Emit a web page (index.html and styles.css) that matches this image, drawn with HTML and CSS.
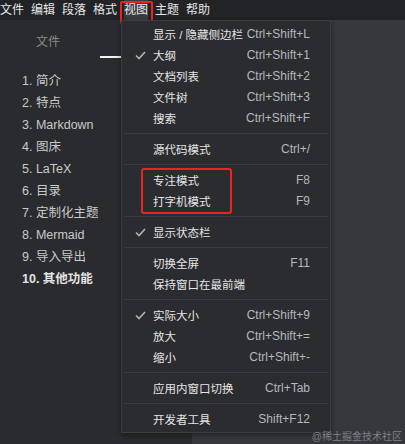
FILE: index.html
```html
<!DOCTYPE html>
<html lang="zh-CN">
<head>
    <meta charset="UTF-8">
    <meta name="viewport" content="width=device-width, initial-scale=1.0">
    <title>Typora</title>
    <link rel="stylesheet" href="styles.css">
</head>
<body>

    <!-- Top menu bar -->
    <div class="menubar">
        <span class="menubar-item">文件</span>
        <span class="menubar-item">编辑</span>
        <span class="menubar-item">段落</span>
        <span class="menubar-item">格式</span>
        <span class="menubar-item active marked">视图</span>
        <span class="menubar-item">主题</span>
        <span class="menubar-item">帮助</span>
    </div>

    <div class="window">
        <!-- Sidebar with outline (second tab is hidden under the menu) -->
        <div class="sidebar">
            <div class="tabs">
                <span class="tab">文件</span>
                <span class="tab current"></span>
            </div>
            <ul class="outline">
                <li>1. 简介</li>
                <li>2. 特点</li>
                <li>3. Markdown</li>
                <li>4. 图床</li>
                <li>5. LaTeX</li>
                <li>6. 目录</li>
                <li>7. 定制化主题</li>
                <li>8. Mermaid</li>
                <li>9. 导入导出</li>
                <li class="active">10. 其他功能</li>
            </ul>
        </div>
        <div class="editor"></div>
    </div>

    <!-- View dropdown -->
    <div class="dropdown">
        <div class="entry"><span class="tick"></span><span class="label">显示<span class="latin"> / </span>隐藏侧边栏</span><span class="key">Ctrl+Shift+L</span></div>
        <div class="entry"><span class="tick"><svg width="11" height="9" viewBox="0 0 11 9"><polyline points="1,4.5 4,7.5 10,1" /></svg></span><span class="label">大纲</span><span class="key">Ctrl+Shift+1</span></div>
        <div class="entry"><span class="tick"></span><span class="label">文档列表</span><span class="key">Ctrl+Shift+2</span></div>
        <div class="entry"><span class="tick"></span><span class="label">文件树</span><span class="key">Ctrl+Shift+3</span></div>
        <div class="entry"><span class="tick"></span><span class="label">搜索</span><span class="key">Ctrl+Shift+F</span></div>
        <div class="sep"></div>
        <div class="entry"><span class="tick"></span><span class="label">源代码模式</span><span class="key">Ctrl+/</span></div>
        <div class="sep"></div>
        <div class="group marked">
            <div class="entry"><span class="tick"></span><span class="label">专注模式</span><span class="key">F8</span></div>
            <div class="entry"><span class="tick"></span><span class="label">打字机模式</span><span class="key">F9</span></div>
        </div>
        <div class="sep"></div>
        <div class="entry"><span class="tick"><svg width="11" height="9" viewBox="0 0 11 9"><polyline points="1,4.5 4,7.5 10,1" /></svg></span><span class="label">显示状态栏</span><span class="key"></span></div>
        <div class="sep"></div>
        <div class="entry"><span class="tick"></span><span class="label">切换全屏</span><span class="key">F11</span></div>
        <div class="entry"><span class="tick"></span><span class="label">保持窗口在最前端</span><span class="key"></span></div>
        <div class="sep"></div>
        <div class="entry"><span class="tick"><svg width="11" height="9" viewBox="0 0 11 9"><polyline points="1,4.5 4,7.5 10,1" /></svg></span><span class="label">实际大小</span><span class="key">Ctrl+Shift+9</span></div>
        <div class="entry"><span class="tick"></span><span class="label">放大</span><span class="key">Ctrl+Shift+=</span></div>
        <div class="entry"><span class="tick"></span><span class="label">缩小</span><span class="key">Ctrl+Shift+-</span></div>
        <div class="sep"></div>
        <div class="entry"><span class="tick"></span><span class="label">应用内窗口切换</span><span class="key">Ctrl+Tab</span></div>
        <div class="sep"></div>
        <div class="entry"><span class="tick"></span><span class="label">开发者工具</span><span class="key">Shift+F12</span></div>
    </div>

    <div class="watermark">@稀土掘金技术社区</div>

</body>
</html>
```

FILE: styles.css
```css
/* Reset and full screen */
body, html {
    margin: 0;
    padding: 0;
    width: 100%;
    height: 100%;
    overflow: hidden;
    background-color: #35383c;
    color: #ddd;
    font-family: "Liberation Sans", "Noto Sans CJK SC", sans-serif;
    font-size: 12px;
}

body {
    display: flex;
    flex-direction: column;
    position: relative;
}

/* Menu bar */
.menubar {
    height: 20px;
    display: flex;
    align-items: center;
    gap: 7px;
    background-color: #222326;
    color: #e6e6e6;
    flex-shrink: 0;
}

.menubar-item {
    position: relative;
    line-height: 20px;
}

.menubar-item.active {
    background-color: #3a3c40;
}

.marked::after {
    content: "";
    position: absolute;
    border: 2px solid #e8251f;
    border-radius: 3px;
    pointer-events: none;
}

.menubar-item.marked::after {
    top: 1px;
    bottom: -4px;
    left: -4px;
    right: -5px;
    border-radius: 2px;
}

/* Window */
.window {
    flex: 1;
    display: flex;
}

.sidebar {
    width: 192px;
    background-color: #2a2b2e;
}

.tabs {
    display: flex;
    height: 38px;
}

.tab {
    width: 96px;
    text-align: center;
    line-height: 45px;
    color: #8a8a8a;
}

.tab.current {
    border-bottom: 2px solid #f2f2f2;
    margin: 0 4px;
    width: 88px;
}

.outline {
    list-style: none;
    margin: 12px 0 0 0;
    padding: 0 0 0 22px;
}

.outline li {
    line-height: 22px;
    font-size: 12.5px;
    color: #c9c9c9;
}

.outline li.active {
    font-weight: bold;
    color: #e4e4e4;
}

.editor {
    flex: 1;
    background-color: #35383c;
}

/* Dropdown menu */
.dropdown {
    position: absolute;
    top: 20px;
    left: 121px;
    width: 208px;
    padding: 3px 0 2px;
    background-color: #2b2c2f;
    border: 1px solid #3b3c40;
    box-shadow: 0 2px 6px rgba(0, 0, 0, 0.4);
}

.entry {
    display: flex;
    align-items: center;
    height: 21px;
    line-height: 21px;
    padding: 0 20px 0 13px;
    color: #e6e6e6;
    white-space: nowrap;
}

.tick {
    width: 18px;
    height: 9px;
    display: flex;
    flex-shrink: 0;
}

.tick polyline {
    fill: none;
    stroke: #b4b4b4;
    stroke-width: 1.6;
}

.entry .label {
    flex: 1;
    font-family: "Noto Sans CJK SC", sans-serif;
    font-size: 11.5px;
}

.entry .label .latin {
    font-family: "Liberation Sans", sans-serif;
}

.entry .key {
    color: #b2b8be;
}

.sep {
    height: 1px;
    background-color: #3a3b3f;
    margin: 4px 2px 5px;
}

.group {
    position: relative;
}

.group.marked::after {
    top: -2px;
    bottom: -2px;
    left: 19px;
    right: 98px;
}

.watermark {
    position: absolute;
    right: 3px;
    bottom: 1px;
    font-size: 10px;
    color: #7d8085;
}
```
